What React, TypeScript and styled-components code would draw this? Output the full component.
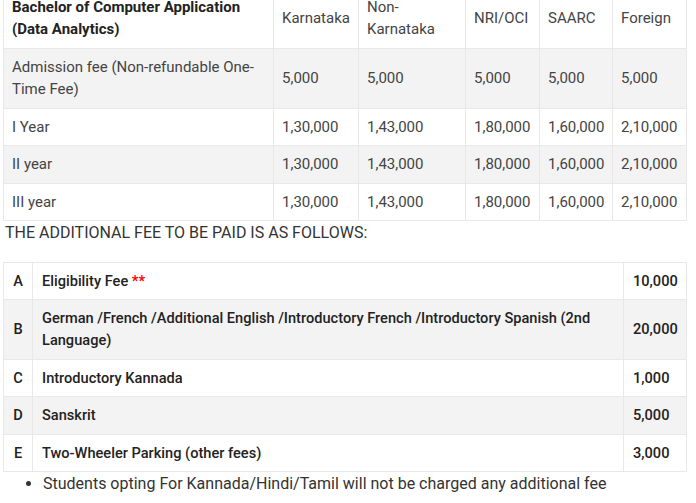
import React from 'react'
import styled, { createGlobalStyle } from 'styled-components'

const GlobalStyle = createGlobalStyle`
  html, body {
    margin: 0;
    padding: 0;
    background: #ffffff;
  }
  body {
    font-family: Roboto, "Liberation Sans", Arial, sans-serif;
    color: #444444;
    font-size: 16px;
    overflow: hidden;
  }
`

// page body, scrolled so the top of the first table is cut off
const Page = styled.div`
  width: 683px;
  margin: -12px 0 0 3px;
`

const Col = styled.col<{ $w: number }>`
  width: ${(p) => p.$w}px;
`

const FeeTable = styled.table`
  width: 683px;
  table-layout: fixed;
  border-collapse: collapse;
  font-size: 15px;
  line-height: 22px;

  tr:nth-child(even) td {
    background-color: #f3f3f3;
  }
`

const Cell = styled.td<{ $head?: boolean }>`
  border: 1px solid #e8e8e8;
  padding: ${(p) => (p.$head ? '7px 30px 8px 8px' : '7px 8px 7.5px')};
  vertical-align: middle;
  text-align: left;
  font-weight: ${(p) => (p.$head ? 700 : 400)};
  color: ${(p) => (p.$head ? '#222222' : '#444444')};
`

const Note = styled.p`
  margin: 0 0 16.5px 0;
  padding-left: 2px;
  font-size: 16px;
  line-height: 24px;
  color: #333333;
`

const ExtraTable = styled.table`
  width: 683px;
  table-layout: fixed;
  border-collapse: collapse;
  font-size: 14.6px;
  line-height: 22px;
  font-weight: 500;
  color: #222222;

  tr:nth-child(even) td {
    background-color: #f3f3f3;
  }
`

const ExtraCell = styled.td<{ $align?: 'left' | 'center' }>`
  border: 1px solid #e8e8e8;
  padding: 7px 8px 7.5px 9px;
  vertical-align: middle;
  text-align: ${(p) => p.$align || 'left'};
`

const KeyCell = styled(ExtraCell)`
  padding-left: 4px;
  padding-right: 4px;
`

const Star = styled.span`
  color: #ff0000;
  font-weight: 700;
`

const Bullets = styled.ul`
  margin: 0;
  padding-left: 40px;
  font-size: 16px;
  line-height: 24px;
  color: #333333;
`

const feeRows = [
  ['Admission fee (Non-refundable One-Time Fee)', '5,000', '5,000', '5,000', '5,000', '5,000'],
  ['I Year', '1,30,000', '1,43,000', '1,80,000', '1,60,000', '2,10,000'],
  ['II year', '1,30,000', '1,43,000', '1,80,000', '1,60,000', '2,10,000'],
  ['III year', '1,30,000', '1,43,000', '1,80,000', '1,60,000', '2,10,000'],
]

const extraRows: { key: string; label: React.ReactNode; amount: string }[] = [
  { key: 'A', label: <>Eligibility Fee <Star>**</Star></>, amount: '10,000' },
  { key: 'B', label: 'German /French /Additional English /Introductory French /Introductory Spanish (2nd Language)', amount: '20,000' },
  { key: 'C', label: 'Introductory Kannada', amount: '1,000' },
  { key: 'D', label: 'Sanskrit', amount: '5,000' },
  { key: 'E', label: 'Two-Wheeler Parking (other fees)', amount: '3,000' },
]

export default function App() {
  return (
    <Page>
      <GlobalStyle />
      <FeeTable>
        <colgroup>
          <Col $w={270} />
          <Col $w={85} />
          <Col $w={107} />
          <Col $w={74} />
          <Col $w={73} />
          <Col $w={74} />
        </colgroup>
        <tbody>
          <tr>
            <Cell $head>Bachelor of Computer Application (Data Analytics)</Cell>
            <Cell>Karnataka</Cell>
            <Cell>Non-Karnataka</Cell>
            <Cell>NRI/OCI</Cell>
            <Cell>SAARC</Cell>
            <Cell>Foreign</Cell>
          </tr>
          {feeRows.map((row) => (
            <tr key={row[0]}>
              {row.map((v, i) => (
                <Cell key={i}>{v}</Cell>
              ))}
            </tr>
          ))}
        </tbody>
      </FeeTable>
      <Note>THE ADDITIONAL FEE TO BE PAID IS AS FOLLOWS:</Note>
      <ExtraTable>
        <colgroup>
          <Col $w={29} />
          <Col $w={591} />
          <Col $w={63} />
        </colgroup>
        <tbody>
          {extraRows.map((r) => (
            <tr key={r.key}>
              <KeyCell $align="center">{r.key}</KeyCell>
              <ExtraCell>{r.label}</ExtraCell>
              <ExtraCell>{r.amount}</ExtraCell>
            </tr>
          ))}
        </tbody>
      </ExtraTable>
      <Bullets>
        <li>Students opting For Kannada/Hindi/Tamil will not be charged any additional fee</li>
      </Bullets>
    </Page>
  )
}
